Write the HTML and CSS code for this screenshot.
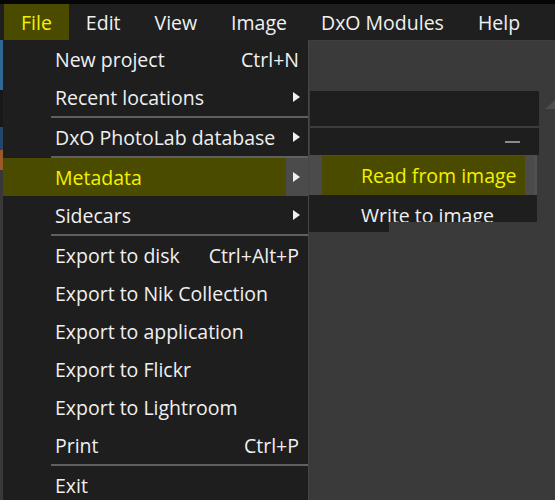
FILE: index.html
```html
<!doctype html>
<html lang="en">
<head>
    <meta charset="UTF-8">
    <title>DxO PhotoLab - File menu</title>
    <link rel="stylesheet" href="styles.css">
</head>
<body>
<div class="menubar">
    <span class="menu-title active">File</span>
    <span class="menu-title">Edit</span>
    <span class="menu-title">View</span>
    <span class="menu-title">Image</span>
    <span class="menu-title">DxO Modules</span>
    <span class="menu-title">Help</span>
</div>
<div class="workspace">
    <div class="edge">
        <span class="edge-blue"></span>
        <span class="edge-dark"></span>
        <span class="edge-navy"></span>
        <span class="edge-orange"></span>
    </div>
    <ul class="dropdown">
        <li class="item"><span class="label">New project</span><span class="shortcut">Ctrl+N</span></li>
        <li class="item"><span class="label">Recent locations</span><span class="arrow"></span></li>
        <li class="sep"></li>
        <li class="item"><span class="label">DxO PhotoLab database</span><span class="arrow"></span></li>
        <li class="sep"></li>
        <li class="item hover"><span class="label">Metadata</span><span class="arrow"></span></li>
        <li class="item"><span class="label">Sidecars</span><span class="arrow"></span></li>
        <li class="sep"></li>
        <li class="item"><span class="label">Export to disk</span><span class="shortcut">Ctrl+Alt+P</span></li>
        <li class="item"><span class="label">Export to Nik Collection</span></li>
        <li class="item"><span class="label">Export to application</span></li>
        <li class="item"><span class="label">Export to Flickr</span></li>
        <li class="item"><span class="label">Export to Lightroom</span></li>
        <li class="item"><span class="label">Print</span><span class="shortcut">Ctrl+P</span></li>
        <li class="sep"></li>
        <li class="item"><span class="label">Exit</span></li>
    </ul>
    <div class="canvas">
        <div class="panel-row">
            <div class="panel">
                <div class="panel-head"></div>
                <div class="panel-bar"><span class="dash"></span></div>
            </div>
            <span class="scroll-up"></span>
        </div>
        <ul class="submenu">
            <li class="sub-item hover"><span class="sub-label">Read from image</span></li>
            <li class="sub-item clipped"><span class="sub-label">Write to image</span></li>
            <li class="sub-tail"></li>
        </ul>
    </div>
</div>
</body>
</html>
```

FILE: styles.css
```css
* {
    margin: 0;
    padding: 0;
    box-sizing: border-box;
}

ul {
    list-style: none;
}

html, body {
    height: 100%;
    overflow: hidden;
}

body {
    background-color: #3a3a3a;
    color: #f0f0f0;
    font-family: "Open Sans", "Noto Sans", sans-serif;
    font-size: 19.5px;
}

.menubar {
    display: flex;
    height: 40px;
    padding-left: 4px;
    border-top: 4px solid #060606;
    background-color: #1f1f1f;
}

.menu-title {
    display: flex;
    align-items: center;
    padding: 0 17px;
    white-space: nowrap;
}

.menu-title.active {
    background-color: #4b4b00;
    color: #f2f200;
}

.workspace {
    display: flex;
    height: 460px;
}

.edge {
    display: flex;
    flex-direction: column;
    width: 3px;
    background-color: #383838;
}

.edge-blue {
    height: 50px;
    background-color: #2f6796;
}

.edge-dark {
    height: 37px;
    background-color: #181818;
}

.edge-navy {
    height: 23px;
    background-color: #23476a;
}

.edge-orange {
    height: 20px;
    background-color: #9a5a28;
}

.dropdown {
    width: 307px;
    background-color: #1e1e1f;
    border-right: 1px solid #464646;
}

.item {
    display: flex;
    align-items: center;
    height: 38px;
    padding-left: 52px;
    white-space: nowrap;
}

.item .label {
    flex: 1;
}

.item .shortcut {
    padding-right: 9px;
}

.item .arrow {
    display: flex;
    align-items: center;
    width: 22px;
    height: 100%;
    padding-left: 7px;
}

.item .arrow::before {
    content: "";
    border-left: 7px solid #f0f0f0;
    border-top: 5px solid transparent;
    border-bottom: 5px solid transparent;
}

.item.hover {
    background-color: #4b4b00;
    color: #f2f200;
}

.item.hover .arrow {
    background-color: #4b4b4b;
}

.sep {
    height: 2px;
    margin-left: 48px;
    background-color: #606060;
}

.canvas {
    flex: 1;
    padding-top: 50px;
    border-top: 1px solid #3f3f3f;
}

.panel-row {
    display: flex;
    gap: 6px;
}

.panel {
    width: 229px;
    margin-left: 1px;
    background-color: #1e1e1f;
}

.panel-head {
    height: 35px;
}

.panel-bar {
    display: flex;
    justify-content: flex-end;
    align-items: center;
    height: 29px;
    padding-right: 19px;
    border-top: 2px solid #3c3c3c;
}

.dash {
    width: 15px;
    height: 2px;
    background-color: #8c8c8c;
}

.scroll-up {
    width: 0;
    height: 0;
    margin-top: 9px;
    border-left: 10px solid transparent;
    border-bottom: 9px solid #4e4e4e;
}

.submenu {
    width: 228px;
}

.sub-item {
    display: flex;
    align-items: center;
    white-space: nowrap;
    background-color: #1e1e1f;
}

.sub-item.hover {
    height: 40px;
    padding: 1px 9px 0 13px;
    background-color: #4b4b4b;
    border-right: 3px solid #505050;
}

.sub-item.hover .sub-label {
    display: flex;
    align-items: center;
    width: 100%;
    height: 100%;
    padding-left: 39px;
    background-color: #4b4b00;
    color: #f2f200;
}

.sub-item.clipped {
    height: 27px;
    align-items: flex-start;
    overflow: hidden;
}

.sub-item.clipped .sub-label {
    padding: 7px 0 0 52px;
}

.sub-tail {
    width: 80px;
    height: 10px;
    background-color: #1e1e1f;
}
```
